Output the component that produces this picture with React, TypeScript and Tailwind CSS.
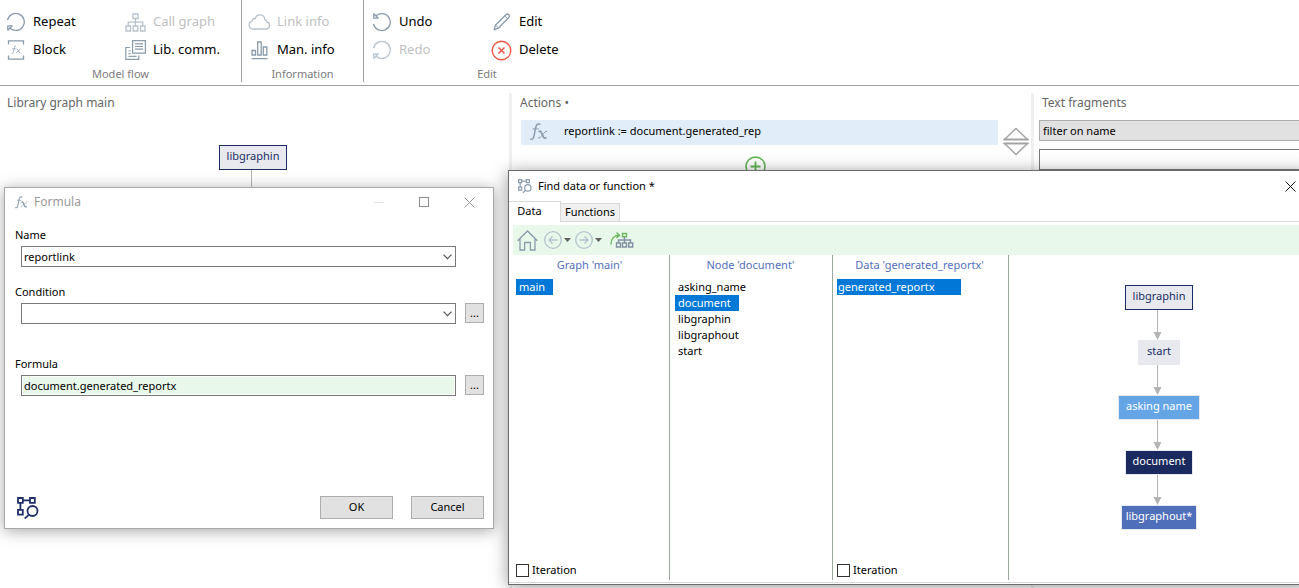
import { useState, type ReactNode } from 'react'
import clsx from 'clsx'

interface ToolButtonProps {
  icon: ReactNode
  label: string
  disabled?: boolean
}

function ToolButton({ icon, label, disabled }: ToolButtonProps) {
  return (
    <button
      disabled={disabled}
      className="flex h-7 items-center gap-1.5 text-[13px] whitespace-nowrap text-black disabled:text-[#bfbfbf]"
    >
      <span className={clsx('flex w-[23px] justify-center', disabled && 'opacity-60')}>{icon}</span>
      {label}
    </button>
  )
}

function ToolGroup({ title, className, children }: { title: string; className: string; children: ReactNode }) {
  return (
    <section className={clsx('flex h-[82px] flex-col pt-2', className)}>
      <div className="flex flex-1">{children}</div>
      <h2 className="h-4 text-center text-[11px] leading-4 text-[#7d7d7d]">{title}</h2>
    </section>
  )
}

function RotateIcon({ flip }: { flip?: boolean }) {
  return (
    <svg width="20" height="20" viewBox="0 0 20 20" fill="none" stroke="#8a9bac" strokeWidth="1.3">
      <g transform={flip ? 'matrix(1 0 0 -1 0 20)' : undefined}>
        <path d="M1.5 8A8.5 8.5 0 1 1 4 16.2" />
        <path d="M1.8 18.5v-4.7h4.8" />
        <path d="M1.8 18.2L6 14" />
      </g>
    </svg>
  )
}

function BlockIcon() {
  return (
    <svg width="18" height="20" viewBox="0 0 18 20" fill="none" stroke="#8a9bac" strokeWidth="1.3">
      <path d="M1.5 4.5V.8h15v3.7M1.5 15.5v3.7h15v-3.7" />
      <path d="M4.5 13.5c2 .6 2-1.5 2.5-4s.6-4 2.2-3.4M5.4 8.8h3.2M9.5 9c1.8-.5 1.7 4 3.8 3.6M13.6 8.8L9.2 12.8" strokeWidth="0.8" />
    </svg>
  )
}

function TreeIcon() {
  return (
    <svg width="21" height="19" viewBox="0 0 21 19" fill="none" stroke="#8a9bac" strokeWidth="1.3">
      <path d="M8 1h5v4.5H8zM1 13h4.5v5H1zM8.2 13h4.6v5H8.2zM15.5 13H20v5h-4.5zM10.5 5.5V13M3.2 13V9.2h14.6V13" />
    </svg>
  )
}

function LibraryIcon() {
  return (
    <svg width="21" height="20" viewBox="0 0 21 20" fill="none" stroke="#8a9bac" strokeWidth="1.2">
      <path d="M7.6.6h12.8v12.6H7.6zM10 3.8h8M10 6.5h8M10 9.2h8" />
      <path d="M5 7.5H.8v11.9h13V15.5M3.5 11h2M3.5 13.7h2M3.5 16.4h8" />
    </svg>
  )
}

function CloudIcon() {
  return (
    <svg width="23" height="16" viewBox="0 0 23 16" fill="none" stroke="#8a9bac" strokeWidth="1.3">
      <path d="M5 15a4.2 4.2 0 0 1-.8-8.2C4.3 5 6 4.2 7.4 4.6 8 2.2 10 .8 12 .9c2.900.1 4.700 2 4.900 4.800 1.400.3 1.900 1.200 2 2.300A3.600 3.600 0 0 1 18.800 15z" />
    </svg>
  )
}

function BarsIcon() {
  return (
    <svg width="17" height="19" viewBox="0 0 17 19" fill="none" stroke="#8a9bac" strokeWidth="1.3">
      <path d="M1 9.5h3.5V14H1zM6.7 1h3.5v13H6.7zM12.3 6h3.5v8h-3.5zM.5 17.7h16" />
    </svg>
  )
}

function PencilIcon() {
  return (
    <svg width="18" height="18" viewBox="0 0 18 18" fill="none" stroke="#8a9bac" strokeWidth="1.3" strokeLinejoin="round">
      <path d="M1.2 16.8l1.2-4.6L12.6 2c1-1.1 2.1-1.3 3.1-.4s.8 2.2-.2 3.2L5.6 15z" />
      <path d="M2.4 12.2L5.6 15M11.7 3l3 2.7" strokeWidth="0.9" />
    </svg>
  )
}

function DeleteIcon() {
  return (
    <svg width="21" height="21" viewBox="0 0 21 21" fill="none" stroke="#ee5748" strokeWidth="1.4">
      <circle cx="10.5" cy="10.5" r="9.3" />
      <path d="M7.5 7.5l6 6M13.5 7.5l-6 6" strokeWidth="1.6" />
    </svg>
  )
}

function FxIcon({ size }: { size: number }) {
  return (
    <svg width={size} height={size} viewBox="0 0 18 18" fill="none" stroke="#8d9cab" strokeLinecap="round">
      <path d="M.8 16.100c2.300.9 2.900-1.500 3.600-5L5.600 5C6.200 1.700 7.500.4 9.800 1.300" strokeWidth="1.5" />
      <path d="M3 5.900h5.300" strokeWidth="1" />
      <path d="M9.300 8.400c3.300-1.300 2.600 8 6.600 6.500" strokeWidth="1.8" />
      <path d="M16.600 8.200c-2.400-.6-5.200 7.600-8.300 6.900" strokeWidth="1" />
    </svg>
  )
}

function FindIcon({ size, color, stroke }: { size: number; color: string; stroke: number }) {
  return (
    <svg width={size} height={size} viewBox="0 0 22 22" fill="none" stroke={color} strokeWidth={stroke}>
      <path d="M1 1h4.800v4.800H1zM13 1h4.800v4.800H13zM1 12.800h4.800v4.800H1zM5.800 3.400H13M3.400 5.800v7" />
      <circle cx="15.5" cy="14" r="5" />
      <path d="M12 17.600l-4.300 4" />
    </svg>
  )
}

function HomeIcon() {
  return (
    <svg width="21" height="21" viewBox="0 0 21 21" fill="none" stroke="#8a9bac" strokeWidth="1.3">
      <path d="M.7 10.800L10.500 1l9.800 9.800M3 9v11h4.600v-7.500h5.800V20H18V9" />
    </svg>
  )
}

function ArrowCircleIcon({ flip }: { flip?: boolean }) {
  return (
    <svg width="18" height="18" viewBox="0 0 18 18" fill="none" stroke="#b3c1cd" strokeWidth="1.3">
      <circle cx="9" cy="9" r="8.3" />
      <path d={flip ? 'M4.500 9h8.500M9.500 5.500L13 9l-3.500 3.500' : 'M13.500 9H5M8.500 5.500L5 9l3.500 3.500'} />
    </svg>
  )
}

function GoToIcon() {
  return (
    <svg width="24" height="16" viewBox="0 0 24 16" fill="none" strokeWidth="1.4">
      <path d="M1 12.500C1 6.500 4 3.300 9 3.300M6.500.6L9.500 3.300 6.500 6M12.500 1.500h4v3.300h-4z" stroke="#6bb85c" />
      <path d="M14.500 5v5.500M8.500 10.500V8h12v2.500M6.500 11h4v4h-4zM12.500 11h4v4h-4zM18.700 11h4v4h-4z" stroke="#8090a2" />
    </svg>
  )
}

function CloseIcon({ color }: { color: string }) {
  return (
    <svg width="11" height="11" viewBox="0 0 11 11" fill="none" stroke={color}>
      <path d="M.5.5l10 10M10.500.5l-10 10" />
    </svg>
  )
}

function Caret() {
  return (
    <svg width="7" height="4" viewBox="0 0 7 4" fill="#606060">
      <path d="M0 0h7L3.500 4z" />
    </svg>
  )
}

function MoveIcon() {
  return (
    <svg width="26" height="29" viewBox="0 0 26 29" fill="none" stroke="#a0a0a0" strokeWidth="1.3">
      <path d="M1.500 12.500L13 1.500l11.500 11zM1.500 16.500L13 27.500l11.500-11z" />
      <path d="M.5 12.500h25M.5 16.500h25" strokeWidth="1.6" />
    </svg>
  )
}

function Connector({ arrow, className }: { arrow?: boolean; className: string }) {
  return (
    <svg width="14" className={className} stroke="#b4b4b4">
      <path d={arrow ? 'M5.500 0v24' : 'M5.500 0v60'} />
      {arrow && <path d="M1.500 22h8L5.500 30z" fill="#b4b4b4" stroke="none" />}
    </svg>
  )
}

function GraphNode({ label, className }: { label: string; className: string }) {
  return (
    <div className={clsx('flex h-[25px] items-center justify-center border pb-0.5 text-[11px] whitespace-nowrap', className)}>
      {label}
    </div>
  )
}

interface ComboProps {
  id: string
  label: string
  options: string[]
}

function Combo({ id, label, options }: ComboProps) {
  return (
    <div className="flex-1">
      <label htmlFor={id} className="-ml-1.5 flex h-[22px] items-center">
        {label}
      </label>
      <div className="relative">
        <select id={id} className="block h-[21px] w-full appearance-none border border-[#7a7a7a] bg-white px-0.5 leading-[18px]">
          {options.map((option) => (
            <option key={option}>{option}</option>
          ))}
        </select>
        <svg width="9" height="6" viewBox="0 0 9 6" fill="none" stroke="#555" strokeWidth="1.2" className="pointer-events-none absolute top-2 right-1">
          <path d="M.5.7l4 4 4-4" />
        </svg>
      </div>
    </div>
  )
}

function MoreButton({ label }: { label: string }) {
  return (
    <button aria-label={label} className="mb-px h-5 w-[19px] border border-[#adadad] bg-[#e1e1e1] text-[11px] leading-4">
      ...
    </button>
  )
}

function FormulaDialog() {
  return (
    <div
      role="dialog"
      aria-label="Formula"
      className="absolute top-[187px] left-1 flex h-[342px] w-[490px] flex-col border border-[#a8a8a8] bg-white text-[11px] shadow-[0_2px_14px_rgba(0,0,0,0.35)]"
    >
      <header className="flex h-7 items-center pr-[18px] pl-2.5 text-[12px] text-[#999]">
        <FxIcon size={13} />
        <span className="ml-1.5 flex-1">Formula</span>
        <div className="flex items-center gap-[35px]">
          <button aria-label="Minimize" className="h-px w-2.5 bg-[#e3e3e3]" />
          <button aria-label="Maximize" className="size-2.5 border border-[#8a8a8a]" />
          <button aria-label="Close">
            <CloseIcon color="#999" />
          </button>
        </div>
      </header>

      <div className="flex flex-col pt-2 pr-[9px] pl-4">
        <div className="mb-3.5 flex pr-7">
          <Combo id="name" label="Name" options={['reportlink']} />
        </div>
        <div className="mb-[29px] flex items-end gap-[9px]">
          <Combo id="condition" label="Condition" options={['']} />
          <MoreButton label="Edit condition" />
        </div>
        <div className="flex items-end gap-[9px]">
          <div className="flex-1">
            <label htmlFor="formula" className="-ml-1.5 flex h-[22px] items-center">
              Formula
            </label>
            <input
              id="formula"
              defaultValue="document.generated_reportx"
              className="block h-[21px] w-full border border-[#7a7a7a] bg-[#e8f8ea] px-0.5 shadow-[inset_0_0_0_1px_white]"
            />
          </div>
          <MoreButton label="Edit formula" />
        </div>
      </div>

      <footer className="mt-auto flex items-center gap-[18px] pr-[9px] pb-[9px] pl-3">
        <button aria-label="Find data or function" className="mr-auto">
          <FindIcon size={22} color="#1f3068" stroke={1.8} />
        </button>
        <button className="h-[23px] w-[73px] border border-[#adadad] bg-[#e1e1e1]">OK</button>
        <button className="h-[23px] w-[73px] border border-[#adadad] bg-[#e1e1e1]">Cancel</button>
      </footer>
    </div>
  )
}

interface ColumnProps {
  title: string
  items: string[]
  initial: string
  iteration?: boolean
  wide?: boolean
  className: string
}

function Column({ title, items, initial, iteration, wide, className }: ColumnProps) {
  const [selected, setSelected] = useState(initial)

  return (
    <div className={clsx('flex flex-col border-r border-[#9aa89c] pt-0.5 pb-[3px]', className)}>
      <h3 className="mb-1.5 h-4 pr-1.5 text-center leading-4 text-[#5470c0]">{title}</h3>
      <ul className="flex-1">
        {items.map((item) => (
          <li key={item}>
            <button
              onClick={() => setSelected(item)}
              className={clsx(
                'block h-4 text-left leading-[14px]',
                wide ? 'w-[124px] pl-px' : 'pr-2 pl-[3px]',
                selected === item && 'bg-[#0078d7] text-white'
              )}
            >
              {item}
            </button>
          </li>
        ))}
      </ul>
      {iteration && (
        <label className="flex h-[13px] items-center gap-[3px]">
          <input type="checkbox" className="size-[13px] appearance-none border border-[#333] bg-white checked:bg-[#0078d7]" />
          Iteration
        </label>
      )}
    </div>
  )
}

const graphNodes = [
  { label: 'libgraphin', style: 'w-[68px] border-[#1b2d63] bg-[#e8e9ef] text-[#1b2d63]' },
  { label: 'start', style: 'w-[42px] border-[#e8e9ef] bg-[#e8e9ef] text-[#1b2d63]' },
  { label: 'asking name', style: 'w-[82px] border-[#e8e9ef] bg-[#65a5e6] text-white' },
  { label: 'document', style: 'w-[68px] border-[#e8e9ef] bg-[#1a2a5e] text-white' },
  { label: 'libgraphout*', style: 'w-[76px] border-[#e8e9ef] bg-[#4f6fba] text-white' },
]

function FindWindow() {
  return (
    <div
      role="dialog"
      aria-label="Find data or function"
      className="absolute top-[170px] -right-[11px] left-[508px] flex h-[415px] flex-col border border-[#6b6b6b] bg-white text-[11px] shadow-[0_2px_16px_rgba(0,0,0,0.4)]"
    >
      <header className="flex h-[30px] items-center pr-[13px] pl-[9px]">
        <FindIcon size={14} color="#8a9bac" stroke={1.9} />
        <span className="ml-1.5 flex-1">Find data or function *</span>
        <button aria-label="Close">
          <CloseIcon color="#111" />
        </button>
      </header>

      <div role="tablist" className="flex h-[21px] items-end border-b border-[#d9d9d9]">
        <button role="tab" aria-selected="true" className="-mb-px h-[21px] w-[52px] border-t border-r border-[#d9d9d9] bg-white pr-2.5 pb-0.5">
          Data
        </button>
        <button role="tab" aria-selected="false" className="h-[18px] w-[59px] border border-b-0 border-l-0 border-[#d9d9d9] bg-[#f0f0f0]">
          Functions
        </button>
      </div>

      <div className="mt-[3px] ml-1 flex h-[30px] shrink-0 items-center bg-[#e8f8ea] pl-1">
        <button aria-label="Home" className="mr-1.5">
          <HomeIcon />
        </button>
        <button aria-label="Back" className="mr-1 flex items-center gap-0.5">
          <ArrowCircleIcon />
          <Caret />
        </button>
        <button aria-label="Forward" className="mr-2 flex items-center gap-0.5">
          <ArrowCircleIcon flip />
          <Caret />
        </button>
        <button aria-label="Go to node">
          <GoToIcon />
        </button>
      </div>

      <div className="mb-0.5 ml-1 flex flex-1">
        <Column title="Graph 'main'" items={['main']} initial="main" iteration className="w-[157px] pl-[3px]" />
        <Column
          title="Node 'document'"
          items={['asking_name', 'document', 'libgraphin', 'libgraphout', 'start']}
          initial="document"
          className="w-[163px] pl-[5px]"
        />
        <Column title="Data 'generated_reportx'" items={['generated_reportx']} initial="generated_reportx" iteration wide className="w-[176px] pl-1" />
        <div className="flex flex-1 flex-col items-center pt-[30px]">
          <div className="flex w-[82px] flex-col items-center">
            {graphNodes.map((node, index) => (
              <div key={node.label} className="flex flex-col items-center">
                {index > 0 && <Connector arrow className="h-[30px]" />}
                <GraphNode label={node.label} className={node.style} />
              </div>
            ))}
          </div>
        </div>
      </div>
      <div className="h-0.5 border-t border-[#d9d9d9]" />
    </div>
  )
}

export default function App() {
  return (
    <div className="relative flex min-h-screen flex-col overflow-hidden bg-white font-['Noto_Sans','Open_Sans',sans-serif] text-black">
      <nav className="flex h-[86px] border-b border-[#a0a0a0]">
        <ToolGroup title="Model flow" className="w-[242px] border-r border-[#a0a0a0]">
          <div className="w-[120px] pl-1">
            <ToolButton icon={<RotateIcon />} label="Repeat" />
            <ToolButton icon={<BlockIcon />} label="Block" />
          </div>
          <div className="pl-1">
            <ToolButton icon={<TreeIcon />} label="Call graph" disabled />
            <ToolButton icon={<LibraryIcon />} label="Lib. comm." />
          </div>
        </ToolGroup>
        <ToolGroup title="Information" className="w-[122px] border-r border-[#a0a0a0]">
          <div className="pl-1.5">
            <ToolButton icon={<CloudIcon />} label="Link info" disabled />
            <ToolButton icon={<BarsIcon />} label="Man. info" />
          </div>
        </ToolGroup>
        <ToolGroup title="Edit" className="w-[246px]">
          <div className="w-[120px] pl-1.5">
            <ToolButton icon={<RotateIcon flip />} label="Undo" />
            <ToolButton icon={<RotateIcon />} label="Redo" disabled />
          </div>
          <div className="pl-1.5">
            <ToolButton icon={<PencilIcon />} label="Edit" />
            <ToolButton icon={<DeleteIcon />} label="Delete" />
          </div>
        </ToolGroup>
      </nav>

      <main className="grid flex-1 grid-cols-[509fr_522fr_268fr] pt-[7px] text-[12px]">
        <section>
          <h1 className="h-[52px] pl-[7px] leading-5 text-[#666]">Library graph main</h1>
          <div className="flex flex-col items-center pr-[3px]">
            <GraphNode label="libgraphin" className="w-[68px] border-[#1b2d63] bg-[#e8e9ef] text-[#1b2d63]" />
            <Connector className="h-10" />
          </div>
        </section>

        <section className="border-l-[3px] border-[#f0f0f0] pl-2">
          <h1 className="h-[27px] leading-5 text-[#666]">Actions •</h1>
          <div className="flex items-start gap-[5px] pr-0.5 pl-px">
            <div className="flex h-[25px] flex-1 items-center bg-[#e1edf9] pb-0.5 pl-[9px]">
              <FxIcon size={18} />
              <span className="ml-4 text-[11px] whitespace-nowrap">reportlink := document.generated_rep</span>
            </div>
            <button aria-label="Move action" className="mt-[7px]">
              <MoveIcon />
            </button>
          </div>
          <div className="flex justify-center pr-10">
            <button aria-label="Add action">
              <svg width="21" height="21" viewBox="0 0 21 21" fill="none" stroke="#62b455" strokeWidth="1.6">
                <circle cx="10.5" cy="10.5" r="9.5" />
                <path d="M10.500 5.500v10M5.500 10.500h10" strokeWidth="1.8" />
              </svg>
            </button>
          </div>
        </section>

        <section className="border-l-[3px] border-[#f0f0f0]">
          <h1 className="h-[27px] pl-2 leading-5 text-[#666]">Text fragments</h1>
          <div className="flex flex-col gap-2 pl-[5px] text-[11px]">
            <select aria-label="Filter" className="h-[21px] appearance-none border border-r-0 border-[#adadad] bg-[#e1e1e1] px-[3px] leading-[18px]">
              <option>filter on name</option>
            </select>
            <input aria-label="Filter text" className="h-[21px] border border-r-0 border-[#7a7a7a] px-[3px]" />
          </div>
        </section>
      </main>

      <FormulaDialog />
      <FindWindow />
    </div>
  )
}
